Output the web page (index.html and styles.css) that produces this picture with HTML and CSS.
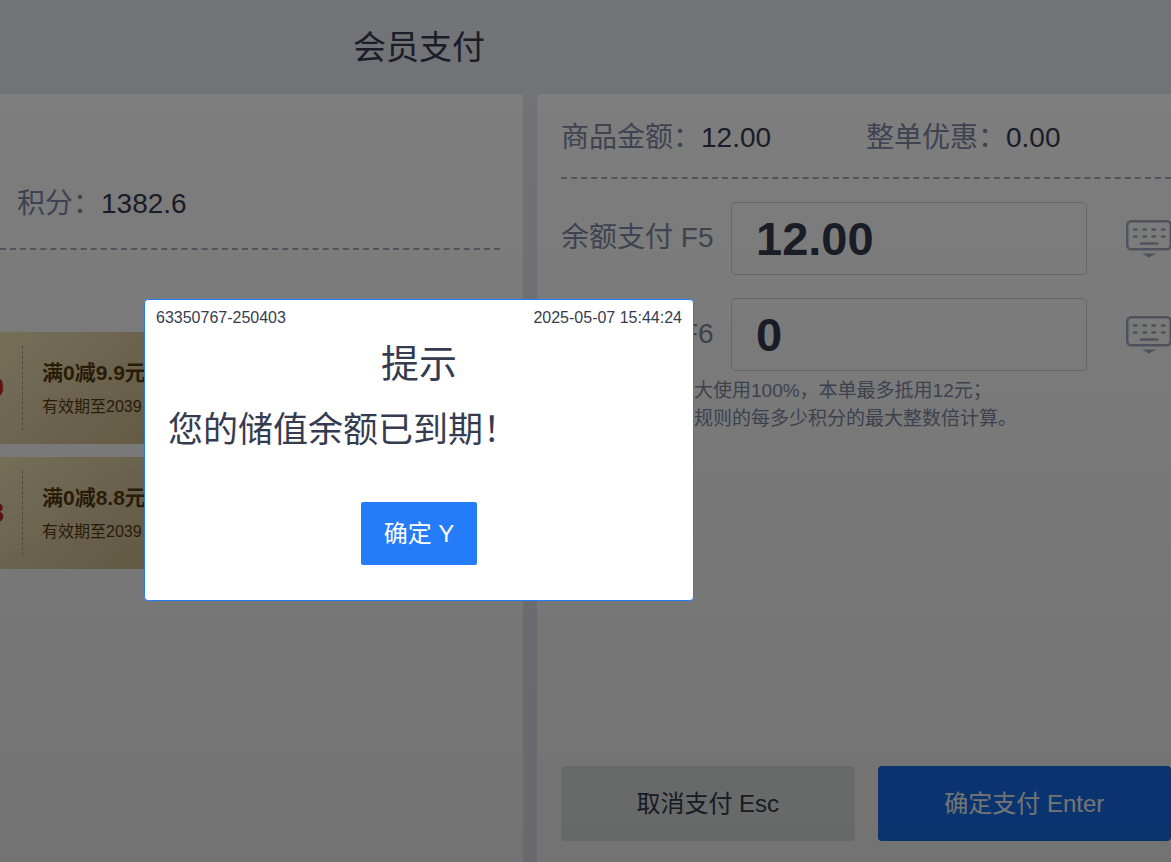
FILE: index.html
```html
<!DOCTYPE html>
<html lang="zh-CN">
  <head>
    <meta charset="UTF-8" />
    <title>会员支付</title>
    <meta name="viewport" content="width=device-width, initial-scale=1.0" />
    <link rel="stylesheet" href="styles.css">
  </head>
  <body>
    <div class="pay-page">
      <header class="pay-header">
        <h1>会员支付</h1>
      </header>
      <main class="pay-main">
        <section class="panel member-panel">
          <div class="member-points">
            <span class="label">积分：</span><span class="value">1382.6</span>
          </div>
          <ul class="coupon-list">
            <li class="coupon">
              <div class="coupon-price">9.9</div>
              <div class="coupon-info">
                <h3>满0减9.9元</h3>
                <p>有效期至2039</p>
              </div>
            </li>
            <li class="coupon">
              <div class="coupon-price">8.8</div>
              <div class="coupon-info">
                <h3>满0减8.8元</h3>
                <p>有效期至2039</p>
              </div>
            </li>
          </ul>
        </section>

        <section class="panel order-panel">
          <div class="order-summary">
            <div><span class="label">商品金额：</span><span class="value">12.00</span></div>
            <div><span class="label">整单优惠：</span><span class="value">0.00</span></div>
          </div>
          <div class="pay-row">
            <label class="label" for="balancePay">余额支付 F5</label>
            <input type="text" id="balancePay" value="12.00" />
            <button class="keyboard-button" type="button" aria-label="键盘">
              <svg width="46" height="40" viewBox="0 0 46 40">
                <rect x="1.25" y="2.25" width="43.5" height="28" rx="4" fill="none" stroke="currentColor" stroke-width="2.5" />
                <path d="M8 10.5h2.5M17.5 10.5h2.5M26.5 10.5h2.5M36 10.5h2.5M8 17.5h2.5M17.5 17.5h2.5M26.5 17.5h2.5M36 17.5h2.5M15 24.5h16.5" fill="none" stroke="currentColor" stroke-width="2.5" stroke-linecap="round" />
                <path d="M16 34.5h14l-7 4z" fill="currentColor" />
              </svg>
            </button>
          </div>
          <div class="pay-row">
            <label class="label" for="pointsPay">积分支付 F6</label>
            <input type="text" id="pointsPay" value="0" />
            <button class="keyboard-button" type="button" aria-label="键盘">
              <svg width="46" height="40" viewBox="0 0 46 40">
                <rect x="1.25" y="2.25" width="43.5" height="28" rx="4" fill="none" stroke="currentColor" stroke-width="2.5" />
                <path d="M8 10.5h2.5M17.5 10.5h2.5M26.5 10.5h2.5M36 10.5h2.5M8 17.5h2.5M17.5 17.5h2.5M26.5 17.5h2.5M36 17.5h2.5M15 24.5h16.5" fill="none" stroke="currentColor" stroke-width="2.5" stroke-linecap="round" />
                <path d="M16 34.5h14l-7 4z" fill="currentColor" />
              </svg>
            </button>
          </div>
          <p class="pay-note">
            注：积分抵扣最大使用100%，本单最多抵用12元；<br />
            抵扣金额按积分规则的每多少积分的最大整数倍计算。
          </p>
          <div class="pay-actions">
            <button class="action-button secondary" type="button">取消支付 Esc</button>
            <button class="action-button primary" type="button">确定支付 Enter</button>
          </div>
        </section>
      </main>
    </div>

    <div class="overlay">
      <div class="dialog" role="dialog" aria-labelledby="dialogTitle">
        <div class="dialog-meta">
          <span>63350767-250403</span>
          <span>2025-05-07 15:44:24</span>
        </div>
        <h2 id="dialogTitle">提示</h2>
        <p class="dialog-message">您的储值余额已到期！</p>
        <button class="dialog-button" type="button">确定 Y</button>
      </div>
    </div>
  </body>
</html>
```

FILE: styles.css
```css
* {
  box-sizing: border-box;
}

body {
  margin: 0;
  font-family: "Liberation Sans", Arial, "Noto Sans CJK SC", sans-serif;
  color: #363c50;
  background-color: #e4e8f1;
}

h1,
h2,
h3,
p,
ul {
  margin: 0;
  padding: 0;
  font-weight: normal;
}

button,
input {
  font-family: inherit;
  color: inherit;
}

.pay-page {
  display: flex;
  flex-direction: column;
  min-height: 100vh;
}

.pay-header {
  padding: 23px 0 21px 353px;
}

.pay-header h1 {
  font-size: 33px;
  line-height: 50px;
}

.pay-main {
  flex: 1;
  display: grid;
  grid-template-columns: 523fr 634fr;
  gap: 14px;
}

.panel {
  display: flex;
  flex-direction: column;
  min-width: 0;
  background-color: #fff;
}

.label {
  color: #808aa6;
}

/* Member info */
.member-panel {
  padding-right: 23px;
  border-radius: 0 4px 0 0;
}

.member-points {
  padding: 90px 0 24px 17px;
  font-size: 28px;
  line-height: 40px;
  border-bottom: 2px dashed #a6adbd;
}

.coupon-list {
  display: flex;
  flex-direction: column;
  gap: 13px;
  padding-top: 82px;
  list-style: none;
}

.coupon {
  display: flex;
  width: 320px;
  height: 112px;
  padding: 14px 0;
  color: #563c10;
  background: linear-gradient(135deg, #f6e8b8, #dccba0 40%, #c8ac6c);
}

.coupon-price {
  display: flex;
  justify-content: flex-end;
  align-items: center;
  width: 23px;
  padding-right: 18px;
  overflow: hidden;
  font-size: 28px;
  font-weight: bold;
  line-height: 84px;
  color: #c82c14;
  border-right: 1px dashed #a39a80;
}

.coupon-info {
  padding: 12px 0 0 19px;
}

.coupon-info h3 {
  font-size: 21px;
  font-weight: bold;
  line-height: 30px;
}

.coupon-info p {
  margin-top: 7px;
  font-size: 16px;
  line-height: 24px;
}

/* Order payment */
.order-panel {
  padding: 0 0 21px 24px;
  border-radius: 4px 0 0 0;
}

.order-summary {
  display: grid;
  grid-template-columns: 1fr 1fr;
  padding: 24px 0 19px;
  font-size: 28px;
  line-height: 40px;
  border-bottom: 2px dashed #a6adbd;
}

.pay-row {
  display: flex;
  align-items: center;
  margin-top: 23px;
}

.pay-row label {
  width: 170px;
  flex-shrink: 0;
  padding-bottom: 2px;
  font-size: 28px;
  line-height: 40px;
}

.pay-row input {
  flex: 1;
  min-width: 0;
  height: 73px;
  padding: 0 24px;
  font-size: 47px;
  font-weight: bold;
  background-color: #fff;
  border: 1px solid #d6d6d6;
  border-radius: 4px;
}

.keyboard-button {
  flex-shrink: 0;
  margin: 0 -1px 0 39px;
  padding: 0;
  border: none;
  background: none;
  color: #a0aac2;
}

.keyboard-button svg {
  display: block;
}

.pay-note {
  margin-top: 6px;
  font-size: 19px;
  line-height: 28px;
  color: #808aa6;
}

.pay-actions {
  display: flex;
  gap: 23px;
  margin-top: auto;
}

.action-button {
  flex: 1;
  height: 75px;
  padding: 0 0 4px;
  font-size: 24px;
  border: none;
  border-radius: 4px;
}

.action-button.primary {
  background-color: #1473f4;
  color: #fff;
}

.action-button.secondary {
  background-color: #e5e6e7;
}

/* Dialog */
.overlay {
  position: fixed;
  inset: 0;
  padding: 299px 144px;
  background: linear-gradient(rgba(0, 0, 0, 0.5), rgba(0, 0, 0, 0.55));
}

.dialog {
  display: flex;
  flex-direction: column;
  width: 550px;
  padding: 8px 11px 35px;
  background-color: #fff;
  border: 1px solid #257cf8;
  border-radius: 4px;
}

.dialog-meta {
  display: flex;
  justify-content: space-between;
  font-size: 16px;
  line-height: 20px;
}

.dialog h2 {
  margin-top: 8px;
  font-size: 38px;
  line-height: 56px;
  text-align: center;
}

.dialog-message {
  margin-top: 13px;
  padding: 0 12px;
  font-size: 35px;
  line-height: 50px;
}

.dialog-button {
  align-self: center;
  width: 116px;
  height: 63px;
  margin-top: 47px;
  padding: 0 0 4px;
  font-size: 24px;
  color: #fff;
  background-color: #257cf8;
  border: none;
  border-radius: 2px;
}
```
